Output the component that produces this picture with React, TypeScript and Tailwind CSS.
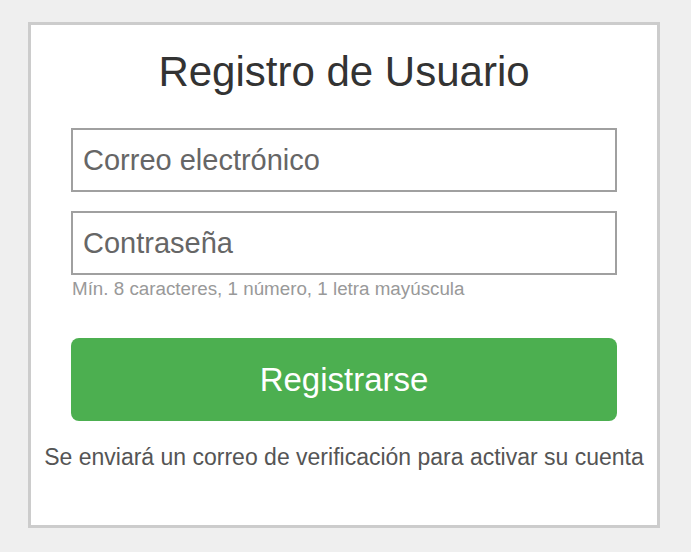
import React from 'react';

const App: React.FC = () => {
    return (
        <div className="min-h-screen bg-[#efefef] pt-[22px] pl-[28px] font-['Liberation_Sans',Arial,sans-serif]">
            <div className="w-[632px] border-[3px] border-[#cccccc] bg-white px-[40px] pt-[23px] pb-[54px]">
                <h1 className="text-center text-[42px] leading-[48px] text-[#333333]">Registro de Usuario</h1>
                <form className="mt-[32px] flex flex-col" onSubmit={(e) => e.preventDefault()}>
                    <input
                        type="email"
                        placeholder="Correo electrónico"
                        className="h-[64px] w-full border-2 border-[#a0a0a0] px-[10px] text-[29px] text-[#333] placeholder:text-[#666666] outline-none"
                    />
                    <input
                        type="password"
                        placeholder="Contraseña"
                        className="mt-[19px] h-[64px] w-full border-2 border-[#a0a0a0] px-[10px] text-[29px] text-[#333] placeholder:text-[#666666] outline-none"
                    />
                    <p className="mt-[3px] pl-[1px] text-[18.8px] leading-[22px] text-[#999999]">Mín. 8 caracteres, 1 número, 1 letra mayúscula</p>
                    <button
                        type="submit"
                        className="mt-[38px] h-[83px] w-full rounded-[8px] bg-[#4caf50] text-[33px] text-white"
                    >
                        Registrarse
                    </button>
                </form>
                <p className="mt-[22px] whitespace-nowrap text-center text-[23px] leading-[28px] text-[#555555] -mx-[40px]">
                    Se enviará un correo de verificación para activar su cuenta
                </p>
            </div>
        </div>
    );
};

export default App;
